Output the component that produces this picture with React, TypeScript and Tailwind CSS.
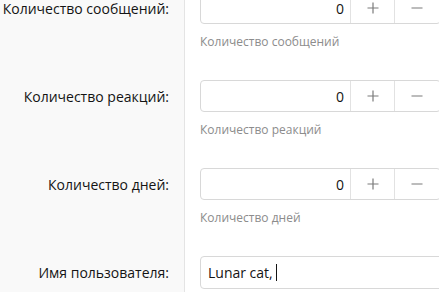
const rows = [
  { label: 'Количество сообщений:', hint: 'Количество сообщений', kind: 'number' },
  { label: 'Количество реакций:', hint: 'Количество реакций', kind: 'number' },
  { label: 'Количество дней:', hint: 'Количество дней', kind: 'number' },
  { label: 'Имя пользователя:', hint: '', kind: 'text' },
];

function NumberBox() {
  return (
    <div className="flex h-[32px] w-[calc(100%+2px)] overflow-hidden rounded-[4px] border border-[#d8d8d8] bg-white">
      <div className="flex flex-1 items-center justify-end pr-[6px] text-[14px] text-[#141414]">0</div>
      <div className="flex w-[44px] items-center justify-center border-l border-[#e2e2e2] text-[#7a7a7a]">
        <svg width="12" height="12" viewBox="0 0 12 12" fill="none" stroke="currentColor" strokeWidth="1.2">
          <path d="M6 0.5v11M0.5 6h11" />
        </svg>
      </div>
      <div className="flex w-[46px] items-center justify-center border-l border-[#e2e2e2] pr-[2px] text-[#7a7a7a]">
        <svg width="12" height="12" viewBox="0 0 12 12" fill="none" stroke="currentColor" strokeWidth="1.2">
          <path d="M0.5 6h11" />
        </svg>
      </div>
    </div>
  );
}

function TextBox() {
  return (
    <div className="flex h-[33px] w-[calc(100%+40px)] items-center rounded-[4px] border border-[#d8d8d8] bg-white pl-[7px] text-[14px] text-[#141414]">
      Lunar cat,
      <span className="ml-[3px] inline-block h-[17px] w-px bg-[#141414]" />
    </div>
  );
}

export default function App() {
  return (
    <div
      className="h-[292px] w-[439px] overflow-hidden bg-white"
      style={{ fontFamily: '"Open Sans", "Noto Sans", sans-serif' }}
    >
      <div className="-mt-[23px]">
        {rows.map((r) => (
          <div key={r.label} className="flex">
            <div className="w-[185px] shrink-0 border-r border-[#e4e4e4] bg-[#f9f9f9] py-[15px] pr-[15px]">
              <div className="flex h-[32px] items-center justify-end text-[14px] text-[#141414]">{r.label}</div>
            </div>
            <div className="min-w-0 flex-1 py-[15px] pl-[15px]">
              {r.kind === 'number' ? <NumberBox /> : <TextBox />}
              {r.hint && <div className="mt-[9px] text-[12px] leading-[17px] text-[#8c8c8c]">{r.hint}</div>}
            </div>
          </div>
        ))}
      </div>
    </div>
  );
}
